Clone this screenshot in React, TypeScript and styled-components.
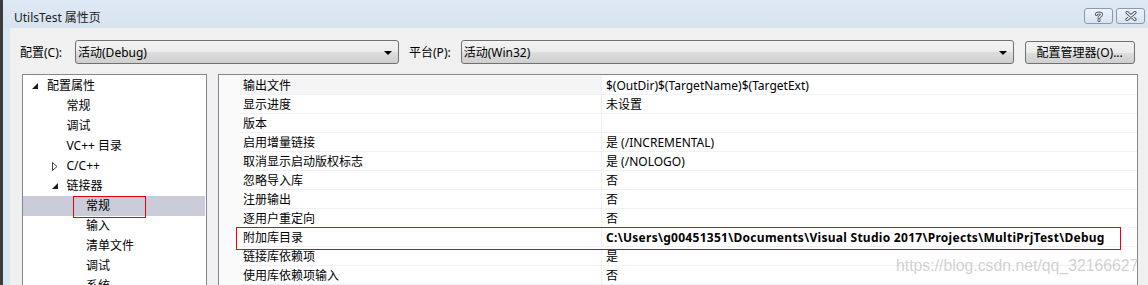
import React from 'react'
import styled, { createGlobalStyle } from 'styled-components'

const GlobalStyle = createGlobalStyle`
  html, body {
    margin: 0;
    padding: 0;
    background: #f0f0f0;
  }
  body {
    font-family: 'Noto Sans', 'Noto Sans CJK SC', sans-serif;
    font-size: 12px;
    color: #000;
  }
`

const Window = styled.div`
  position: relative;
  height: 285px;
  overflow: hidden;
  display: flex;
  flex-direction: column;
  border-left: 3px solid #3b3b3b;
  background: #dbe6f3;
`

const TitleBar = styled.div`
  height: 28px;
  flex-shrink: 0;
  display: flex;
  align-items: flex-start;
  padding: 0 3px 0 11px;
  background: linear-gradient(#dfe9f5, #d8e3f0);
`

const Title = styled.div`
  margin-top: 10px;
  line-height: 16px;
  font-size: 12px;
  color: #222;
`

const CaptionButtons = styled.div`
  margin-left: auto;
  margin-top: 8px;
  display: flex;
  gap: 3px;
`

const CaptionButton = styled.div`
  width: 29px;
  height: 16px;
  box-sizing: border-box;
  border: 1px solid #8c99ad;
  border-radius: 3px;
  background: linear-gradient(#eef3fa, #d9e3f0);
  display: flex;
  align-items: center;
  justify-content: center;
`

const Body = styled.div`
  flex: 1;
  min-height: 0;
  margin-left: 7px;
  background: #f0f0f0;
  padding: 12px 0 0 10px;
  display: flex;
  flex-direction: column;
`

const Toolbar = styled.div`
  display: flex;
  align-items: center;
  height: 24px;
  flex-shrink: 0;
`

const FieldLabel = styled.label<{ $gap: number; $lead?: number }>`
  margin-left: ${(p) => p.$lead ?? 0}px;
  margin-right: ${(p) => p.$gap}px;
  padding-top: 1px;
  line-height: 16px;
  white-space: nowrap;
`

const Combo = styled.div<{ $width: number }>`
  width: ${(p) => p.$width}px;
  height: 24px;
  box-sizing: border-box;
  border: 1px solid #707070;
  border-radius: 3px;
  background: linear-gradient(#f3f3f3 0%, #ebebeb 50%, #dddddd 51%, #cfcfcf 100%);
  display: flex;
  align-items: center;
  padding: 1px 6px 0 2px;
  line-height: 16px;
`

const ComboText = styled.span`
  flex: 1;
`

const Arrow = styled.span`
  width: 0;
  height: 0;
  border-left: 4px solid transparent;
  border-right: 4px solid transparent;
  border-top: 4px solid #000;
`

const PushButton = styled.button`
  margin-left: 11px;
  margin-top: 1px;
  width: 110px;
  height: 23px;
  box-sizing: border-box;
  border: 1px solid #707070;
  border-radius: 3px;
  background: linear-gradient(#f2f2f2 0%, #ebebeb 50%, #dddddd 51%, #cfcfcf 100%);
  font: inherit;
  color: #000;
  padding: 1px 0 0;
  line-height: 16px;
`

const Panels = styled.div`
  flex: 1;
  min-height: 0;
  margin-top: 10px;
  padding-left: 2px;
  display: flex;
  gap: 11px;
`

const Tree = styled.div`
  width: 185px;
  box-sizing: border-box;
  border: 1px solid #828790;
  border-bottom: none;
  padding-top: 1px;
  background: #fff;
  overflow: hidden;
`

const TreeItem = styled.div<{ $level: number; $selected?: boolean; $marked?: boolean }>`
  position: relative;
  height: 20px;
  margin-right: 1px;
  display: flex;
  align-items: center;
  padding-left: ${(p) => 9 + p.$level * 19.5}px;
  box-sizing: border-box;
  background: ${(p) => (p.$selected ? '#cbccda' : 'transparent')};
  line-height: 16px;
  white-space: nowrap;

  ${(p) =>
    p.$marked &&
    `
    &::after {
      content: '';
      position: absolute;
      left: 50px;
      top: 0;
      width: 73px;
      height: 22px;
      box-sizing: border-box;
      border: 1px solid #e8000d;
      z-index: 1;
    }
  `}
`

const Expander = styled.span`
  width: 15px;
  flex-shrink: 0;
  display: flex;
  align-items: center;
`

const Grid = styled.div`
  width: 920px;
  box-sizing: border-box;
  border: 1px solid #828790;
  border-bottom: none;
  padding-top: 1px;
  background: #fafafa;
  overflow: hidden;
`

const Row = styled.div<{ $marked?: boolean }>`
  position: relative;
  display: grid;
  grid-template-columns: 21px 362px 1fr;
  height: 19px;

  ${(p) =>
    p.$marked &&
    `
    &::after {
      content: '';
      position: absolute;
      left: 17px;
      right: 16px;
      top: -1px;
      height: 23px;
      box-sizing: border-box;
      border: 1px solid #e8000d;
      z-index: 1;
    }
  `}
`

const Cell = styled.div<{ $focused?: boolean; $bold?: boolean; $name?: boolean }>`
  box-sizing: border-box;
  border-bottom: 1px solid #f0f0f8;
  border-right: ${(p) => (p.$name ? '1px solid #f0f0f0' : 'none')};
  background: ${(p) => (p.$focused ? '#f5f5f5' : '#fff')};
  padding-left: ${(p) => (p.$name ? 3 : 4)}px;
  line-height: 20px;
  font-weight: ${(p) => (p.$bold ? 700 : 400)};
  letter-spacing: ${(p) => (p.$bold ? '0.28px' : 'normal')};
  white-space: nowrap;
  overflow: hidden;
`

const Watermark = styled.div`
  position: absolute;
  left: 893px;
  top: 256px;
  font-family: 'Liberation Sans', Arial, sans-serif;
  font-size: 15.8px;
  line-height: 20px;
  color: rgba(170, 170, 170, 0.55);
  pointer-events: none;
  z-index: 2;
`

const OpenIcon = () => (
  <svg width="6" height="6" viewBox="0 0 6 6">
    <path d="M6 0 L6 6 L0 6 Z" fill="#1a1a1a" />
  </svg>
)

const ClosedIcon = () => (
  <svg width="6" height="9" viewBox="0 0 6 9">
    <path d="M0.5 0.5 L5 4.5 L0.5 8.5 Z" fill="#fff" stroke="#404040" strokeWidth="1" />
  </svg>
)

const HelpGlyph = () => (
  <svg width="10" height="11" viewBox="0 0 10 11">
    <path
      d="M2.5 3.5 C2.5 1.5 7.5 1.5 7.5 3.5 C7.5 5 5 5 5 6.8 M5 8.6 L5 9.6"
      fill="none"
      stroke="#4c5566"
      strokeWidth="3"
      strokeLinecap="round"
    />
    <path
      d="M2.5 3.5 C2.5 1.5 7.5 1.5 7.5 3.5 C7.5 5 5 5 5 6.8 M5 8.6 L5 9.6"
      fill="none"
      stroke="#fff"
      strokeWidth="1.2"
      strokeLinecap="round"
    />
  </svg>
)

const CloseGlyph = () => (
  <svg width="12" height="10" viewBox="0 0 12 10">
    <path d="M2 1.5 L10 8.5 M10 1.5 L2 8.5" stroke="#4c5566" strokeWidth="3.2" strokeLinecap="round" />
    <path d="M2 1.5 L10 8.5 M10 1.5 L2 8.5" stroke="#fff" strokeWidth="1.3" strokeLinecap="round" />
  </svg>
)

type TTreeNode = {
  label: string
  level: number
  expander?: 'open' | 'closed'
  selected?: boolean
  marked?: boolean
}

const treeNodes: TTreeNode[] = [
  { label: '配置属性', level: 0, expander: 'open' },
  { label: '常规', level: 1 },
  { label: '调试', level: 1 },
  { label: 'VC++ 目录', level: 1 },
  { label: 'C/C++', level: 1, expander: 'closed' },
  { label: '链接器', level: 1, expander: 'open' },
  { label: '常规', level: 2, selected: true, marked: true },
  { label: '输入', level: 2 },
  { label: '清单文件', level: 2 },
  { label: '调试', level: 2 },
  { label: '系统', level: 2 },
]

type TProperty = {
  name: string
  value: string
  bold?: boolean
  marked?: boolean
}

const properties: TProperty[] = [
  { name: '输出文件', value: '$(OutDir)$(TargetName)$(TargetExt)' },
  { name: '显示进度', value: '未设置' },
  { name: '版本', value: '' },
  { name: '启用增量链接', value: '是 (/INCREMENTAL)' },
  { name: '取消显示启动版权标志', value: '是 (/NOLOGO)' },
  { name: '忽略导入库', value: '否' },
  { name: '注册输出', value: '否' },
  { name: '逐用户重定向', value: '否' },
  {
    name: '附加库目录',
    value: 'C:\\Users\\g00451351\\Documents\\Visual Studio 2017\\Projects\\MultiPrjTest\\Debug',
    bold: true,
    marked: true,
  },
  { name: '链接库依赖项', value: '是' },
  { name: '使用库依赖项输入', value: '否' },
]

export default function App() {
  return (
    <>
      <GlobalStyle />
      <Window>
        <TitleBar>
          <Title>UtilsTest 属性页</Title>
          <CaptionButtons>
            <CaptionButton>
              <HelpGlyph />
            </CaptionButton>
            <CaptionButton>
              <CloseGlyph />
            </CaptionButton>
          </CaptionButtons>
        </TitleBar>
        <Body>
          <Toolbar>
            <FieldLabel $gap={13}>配置(C):</FieldLabel>
            <Combo $width={324}>
              <ComboText>活动(Debug)</ComboText>
              <Arrow />
            </Combo>
            <FieldLabel $lead={10} $gap={10}>
              平台(P):
            </FieldLabel>
            <Combo $width={553}>
              <ComboText>活动(Win32)</ComboText>
              <Arrow />
            </Combo>
            <PushButton>配置管理器(O)...</PushButton>
          </Toolbar>
          <Panels>
            <Tree>
              {treeNodes.map((node, i) => (
                <TreeItem key={i} $level={node.level} $selected={node.selected} $marked={node.marked}>
                  <Expander>
                    {node.expander === 'open' && <OpenIcon />}
                    {node.expander === 'closed' && <ClosedIcon />}
                  </Expander>
                  {node.label}
                </TreeItem>
              ))}
            </Tree>
            <Grid>
              {properties.map((prop, i) => (
                <Row key={i} $marked={prop.marked}>
                  <span />
                  <Cell $name $focused={i === 0}>
                    {prop.name}
                  </Cell>
                  <Cell $bold={prop.bold}>{prop.value}</Cell>
                </Row>
              ))}
            </Grid>
          </Panels>
        </Body>
        <Watermark>https://blog.csdn.net/qq_32166627</Watermark>
      </Window>
    </>
  )
}
